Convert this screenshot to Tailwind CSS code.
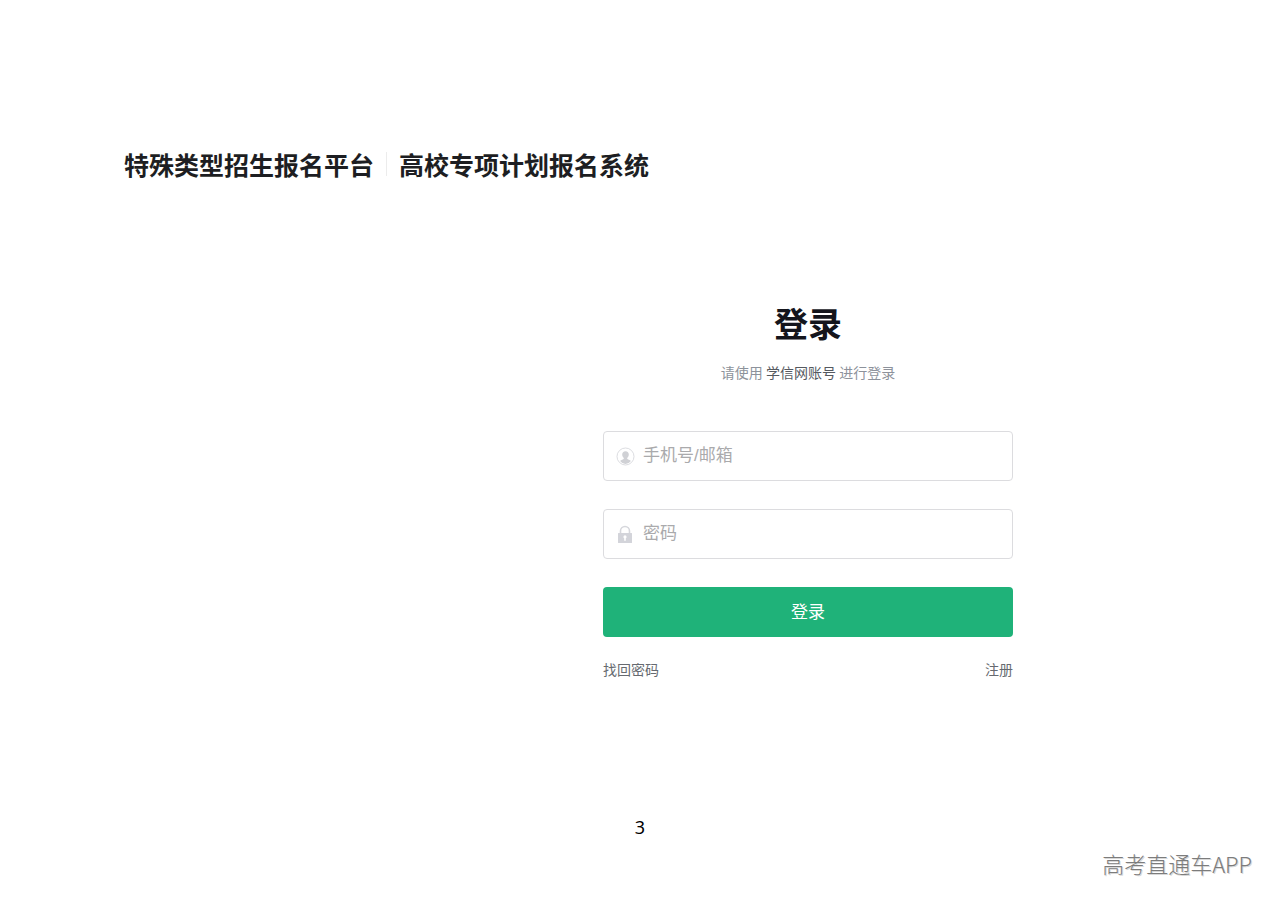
<!DOCTYPE html>
<html lang="zh-CN">
<head>
  <meta charset="UTF-8">
  <meta name="viewport" content="width=device-width, initial-scale=1.0">
  <title>高校专项计划报名系统 - 登录</title>
  <script src="https://cdn.jsdelivr.net/npm/@tailwindcss/browser@4"></script>
</head>
<body class="bg-white font-['Noto_Sans_CJK_SC',sans-serif] flex flex-col min-h-screen">

  <!-- Header -->
  <header class="flex items-center gap-4 px-[124px] pt-36 text-[25px] leading-10 font-bold text-[#1d1e22] whitespace-nowrap">
    <span>特殊类型招生报名平台</span>
    <span class="w-px h-6 -mx-1 bg-[#ececec]"></span>
    <span>高校专项计划报名系统</span>
  </header>

  <!-- Login -->
  <main class="flex justify-end pr-[267px] pt-[114px]">
    <form class="w-full max-w-[410px]">
      <h1 class="text-center text-[34px] leading-[50px] font-bold text-[#14151c]">登录</h1>
      <p class="mt-3 text-center text-sm leading-6 text-[#8d929b]">请使用 <span class="text-[#55595f]">学信网账号</span> 进行登录</p>

      <label class="mt-[47px] flex items-center gap-2 h-[50px] px-3 border border-[#dcdcdf] rounded">
        <svg class="size-[19px] shrink-0" viewBox="0 0 19 19" fill="none" aria-hidden="true">
          <circle cx="9.5" cy="9.5" r="8.5" stroke="#dcdde1" />
          <path d="M9.500 4.200c2.100 0 3.300 1.400 3.300 3.300 0 1.500-.7 2.700-1.600 3.400v.8c.3.800 2.800.8 3.700 2.300A7 7 0 0 1 9.500 17a7 7 0 0 1-5.400-3c.9-1.500 3.400-1.500 3.700-2.300v-.8C6.900 10.200 6.200 9 6.200 7.500c0-1.900 1.200-3.300 3.300-3.300z" fill="#d0d1d5" />
        </svg>
        <input type="text" aria-label="手机号/邮箱" placeholder="手机号/邮箱" class="w-full font-['Liberation_Sans','Noto_Sans_CJK_SC',sans-serif] text-[17px] leading-6 outline-none placeholder:text-[#aaaaac]">
      </label>

      <label class="mt-7 flex items-center gap-2 h-[50px] px-3 border border-[#dcdcdf] rounded">
        <svg class="size-[19px] shrink-0" viewBox="0 0 19 19" fill="none" aria-hidden="true">
          <path d="M4.500 9V6a4.500 4.500 0 0 1 9 0v3" stroke="#d6d7dc" stroke-width="1.600" />
          <path fill-rule="evenodd" d="M2.500 8h13a.5.5 0 0 1 .5.5v9a.5.5 0 0 1-.5.5h-13a.5.5 0 0 1-.5-.5v-9a.5.5 0 0 1 .5-.5zM9 10.300a1.600 1.600 0 0 0-1.600 1.600c0 .6.300 1 .8 1.300v2.600h1.600v-2.600c.5-.3.8-.7.8-1.300A1.600 1.600 0 0 0 9 10.300z" fill="#d3d4da" />
        </svg>
        <input type="password" aria-label="密码" placeholder="密码" class="w-full font-['Liberation_Sans','Noto_Sans_CJK_SC',sans-serif] text-[17px] leading-6 outline-none placeholder:text-[#aaaaac]">
      </label>

      <button type="button" class="mt-7 w-full h-[50px] rounded bg-[#1fb279] pb-0.5 text-[17px] leading-6 text-white">登录</button>

      <div class="mt-5 flex justify-between text-sm leading-6 text-[#666a70]">
        <a href="#">找回密码</a>
        <a href="#">注册</a>
      </div>
    </form>
  </main>

  <!-- Footer -->
  <footer class="mt-auto pb-[26px]">
    <p class="text-center font-['Noto_Sans',sans-serif] text-lg leading-6 text-black">3</p>
    <p class="mt-2 pr-7 text-right text-[22px] leading-8 font-light text-[#7c7c7c] [text-shadow:1px_1px_0_#d8d8d8]">高考直通车APP</p>
  </footer>

</body>
</html>
